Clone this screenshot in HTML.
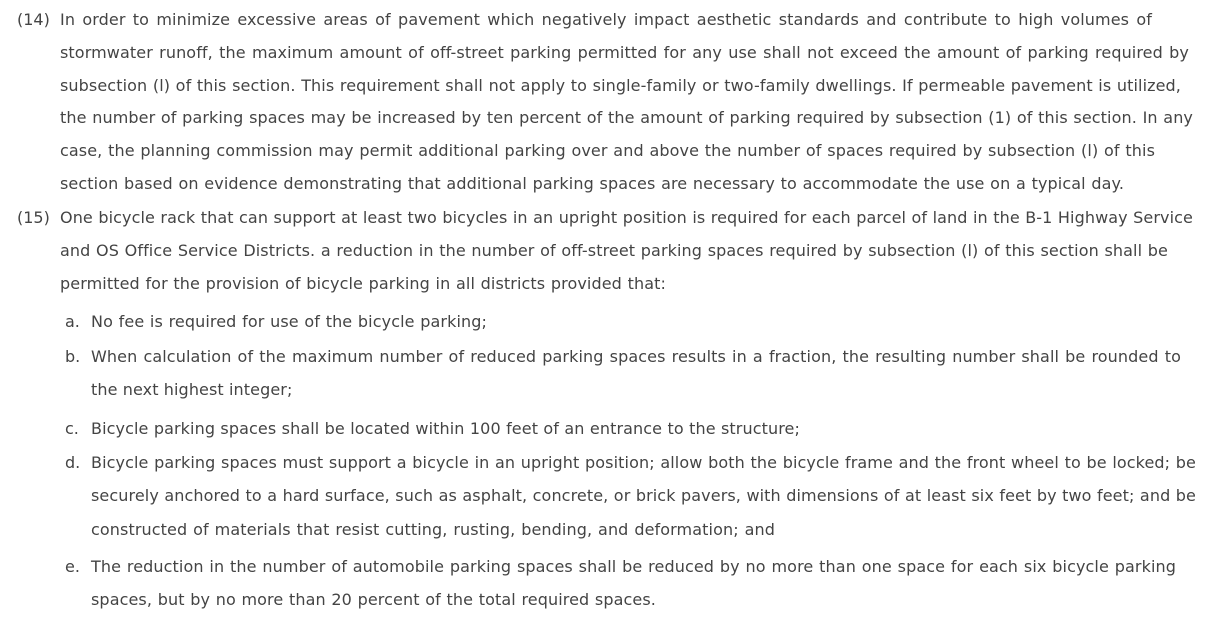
<!DOCTYPE html>
<html><head><meta charset="utf-8"><style>
body{margin:0;background:#fff;width:1220px;height:620px;overflow:hidden;position:relative;font-family:"DejaVu Sans","Liberation Sans",sans-serif;font-size:16px;color:#444;}
div{position:absolute;height:33px;line-height:33px;white-space:nowrap;letter-spacing:0.1px;text-align:justify;text-align-last:justify}
div.n{letter-spacing:0;text-align:left;text-align-last:left}
</style></head><body>
<div class="n" style="left:17px;top:3px">(14)</div>
<div style="left:60px;top:3px;width:1092px">In order to minimize excessive areas of pavement which negatively impact aesthetic standards and contribute to high volumes of</div>
<div style="left:60px;top:36px;width:1129px">stormwater runoff, the maximum amount of off-street parking permitted for any use shall not exceed the amount of parking required by</div>
<div style="left:60px;top:69px;width:1121px">subsection (l) of this section. This requirement shall not apply to single-family or two-family dwellings. If permeable pavement is utilized,</div>
<div style="left:60px;top:101px;width:1133px">the number of parking spaces may be increased by ten percent of the amount of parking required by subsection (1) of this section. In any</div>
<div style="left:60px;top:134px;width:1095px">case, the planning commission may permit additional parking over and above the number of spaces required by subsection (l) of this</div>
<div style="left:60px;top:167px;width:1064px">section based on evidence demonstrating that additional parking spaces are necessary to accommodate the use on a typical day.</div>
<div class="n" style="left:17px;top:201px">(15)</div>
<div style="left:60px;top:201px;width:1133px">One bicycle rack that can support at least two bicycles in an upright position is required for each parcel of land in the B-1 Highway Service</div>
<div style="left:60px;top:234px;width:1108px">and OS Office Service Districts. a reduction in the number of off-street parking spaces required by subsection (l) of this section shall be</div>
<div style="left:60px;top:267px;width:606px">permitted for the provision of bicycle parking in all districts provided that:</div>
<div class="n" style="left:65px;top:305px">a.</div>
<div style="left:91px;top:305px;width:396px">No fee is required for use of the bicycle parking;</div>
<div class="n" style="left:65px;top:340px">b.</div>
<div style="left:91px;top:340px;width:1090px">When calculation of the maximum number of reduced parking spaces results in a fraction, the resulting number shall be rounded to</div>
<div style="left:91px;top:373px;width:198px">the next highest integer;</div>
<div class="n" style="left:65px;top:412px">c.</div>
<div style="left:91px;top:412px;width:709px">Bicycle parking spaces shall be located within 100 feet of an entrance to the structure;</div>
<div class="n" style="left:65px;top:446px">d.</div>
<div style="left:91px;top:446px;width:1105px">Bicycle parking spaces must support a bicycle in an upright position; allow both the bicycle frame and the front wheel to be locked; be</div>
<div style="left:91px;top:479px;width:1105px">securely anchored to a hard surface, such as asphalt, concrete, or brick pavers, with dimensions of at least six feet by two feet; and be</div>
<div style="left:91px;top:513px;width:684px">constructed of materials that resist cutting, rusting, bending, and deformation; and</div>
<div class="n" style="left:65px;top:550px">e.</div>
<div style="left:91px;top:550px;width:1085px">The reduction in the number of automobile parking spaces shall be reduced by no more than one space for each six bicycle parking</div>
<div style="left:91px;top:583px;width:565px">spaces, but by no more than 20 percent of the total required spaces.</div>
</body></html>
